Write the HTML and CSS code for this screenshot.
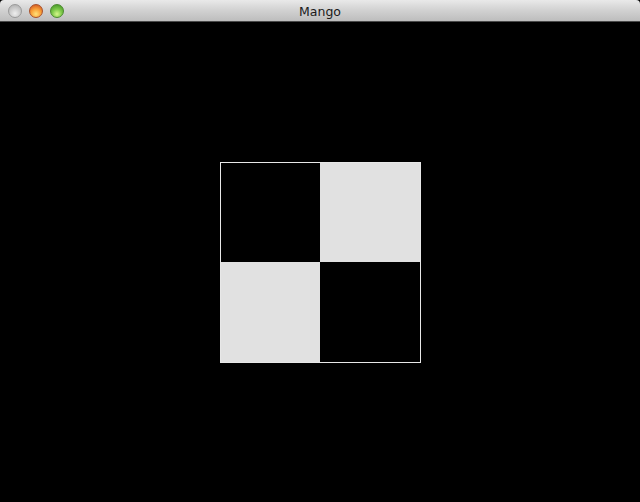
FILE: index.html
```html
<!DOCTYPE html>
<html>
<head>
<meta charset="utf-8">
<link rel="stylesheet" href="styles.css">
</head>
<body>
<div class="window">
  <div class="titlebar">
    <div class="lights">
      <span class="light light-gray"></span>
      <span class="light light-red"></span>
      <span class="light light-green"></span>
    </div>
    <div class="title">Mango</div>
  </div>
  <div class="canvas">
    <div class="board">
      <div class="sq sq-dark"></div>
      <div class="sq sq-light"></div>
      <div class="sq sq-light"></div>
      <div class="sq sq-dark"></div>
    </div>
  </div>
</div>
</body>
</html>
```

FILE: styles.css
```css
html, body {
  margin: 0;
  padding: 0;
  background: #000;
}
.window {
  width: 640px;
  height: 502px;
  background: #000;
  display: flex;
  flex-direction: column;
}
.titlebar {
  position: relative;
  height: 21px;
  border-bottom: 1px solid #4a4a4a;
  border-radius: 4px 4px 0 0;
  background: linear-gradient(to bottom, #e9e9e9 0%, #d3d3d3 45%, #bdbdbd 100%);
  display: flex;
  align-items: center;
  justify-content: center;
  flex-shrink: 0;
}
.lights {
  position: absolute;
  left: 8px;
  top: 4px;
  display: flex;
  gap: 7px;
}
.light {
  width: 14px;
  height: 14px;
  border-radius: 50%;
  box-sizing: border-box;
  display: block;
}
.light-gray {
  background: radial-gradient(circle at 50% 70%, #eeeeee 0%, #cfcfcf 45%, #a9a9a9 100%);
  border: 1px solid #9a9a9a;
}
.light-red {
  background: radial-gradient(circle at 50% 75%, #ffe27a 0%, #f9a23a 45%, #c9471c 100%);
  border: 1px solid #a8502a;
}
.light-green {
  background: radial-gradient(circle at 50% 75%, #d6f78a 0%, #7dc94a 45%, #3c8c22 100%);
  border: 1px solid #4b8a2e;
}
.title {
  font-family: "DejaVu Sans", "Liberation Sans", sans-serif;
  font-size: 12.5px;
  color: #1a1a1a;
  line-height: 21px;
  padding-top: 1px;
}
.canvas {
  flex: 1;
  padding: 140px 0 0 220px;
}
.board {
  width: 199px;
  height: 199px;
  border: 1px solid #e8e8e8;
  display: grid;
  grid-template-columns: 99px 100px;
  grid-template-rows: 99px 100px;
}
.sq-dark { background: #000; }
.sq-light { background: #e1e1e1; }
```
